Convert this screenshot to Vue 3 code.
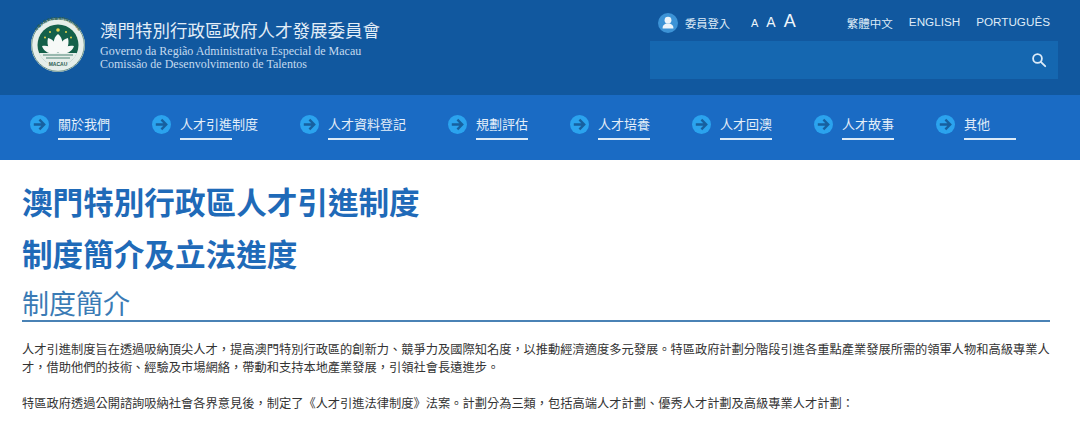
<template>
  <div class="page">
    <header class="top">
      <div class="brand">
        <svg class="emblem" width="56" height="56" viewBox="0 0 56 56">
          <defs>
            <path id="ringTop" d="M 3.6 33 A 25 25 0 1 1 52.4 33" />
          </defs>
          <circle cx="28" cy="28" r="27" fill="#e6eeea" />
          <circle cx="28" cy="28" r="26.3" fill="none" stroke="#6f958b" stroke-width="1" />
          <text class="ring-text"><textPath href="#ringTop" startOffset="50%" text-anchor="middle">中華人民共和國澳門特別行政區</textPath></text>
          <circle cx="28" cy="28" r="20.5" fill="#14604a" />
          <path d="M9 36 A20.5 20.5 0 0 0 47 36 Z" fill="#e6eeea" />
          <path d="M13 38 H43 M16 41 H40" stroke="#7fa89c" stroke-width="1.3" />
          <path d="M28 17 C33.5 21 34 30 28 36 C22 30 22.5 21 28 17 Z" fill="#f6f9f7" />
          <path d="M18 21 C24 22 27.5 29 27.5 36 C20 36 16 29 18 21 Z M38 21 C32 22 28.500 29 28.500 36 C36 36 40 29 38 21 Z" fill="#f6f9f7" />
          <path d="M12 29 C18 27.500 25 31 27 36 C20 38 14 35 12 29 Z M44 29 C38 27.500 31 31 29 36 C36 38 42 35 44 29 Z" fill="#f6f9f7" />
          <g fill="#e6d34a">
            <circle cx="28" cy="13" r="1.8" />
            <circle cx="20" cy="15" r="1" />
            <circle cx="36" cy="15" r="1" />
            <circle cx="15" cy="20.500" r="1" />
            <circle cx="41" cy="20.500" r="1" />
          </g>
          <text x="28" y="48.500" class="ring-name" text-anchor="middle">MACAU</text>
        </svg>
        <div class="brand-text">
          <div class="brand-zh">澳門特別行政區政府人才發展委員會</div>
          <div class="brand-pt">Governo da Região Administrativa Especial de Macau</div>
          <div class="brand-pt">Comissão de Desenvolvimento de Talentos</div>
        </div>
      </div>

      <div class="tools">
        <div class="tool-row">
          <a class="login">
            <span class="avatar">
              <svg width="20" height="20" viewBox="0 0 20 20">
                <circle cx="10" cy="7.2" r="3.4" fill="#eef5fb" />
                <path d="M4.6 15.4 C4.6 12 7 10.6 10 10.6 C13 10.6 15.4 12 15.4 15.4 Z" fill="#eef5fb" />
              </svg>
            </span>
            委員登入
          </a>
          <div class="sizes">
            <span class="size-s">A</span>
            <span class="size-m">A</span>
            <span class="size-l">A</span>
          </div>
          <div class="langs">
            <a>繁體中文</a>
            <a>ENGLISH</a>
            <a>PORTUGUÊS</a>
          </div>
        </div>
        <div class="search">
          <svg width="16" height="16" viewBox="0 0 16 16" fill="none" stroke="#dcebf8" stroke-width="1.8">
            <circle cx="6.5" cy="6.5" r="4.4" />
            <path d="M9.8 9.8 L14.2 14.2" stroke-linecap="round" />
          </svg>
        </div>
      </div>
    </header>

    <nav class="nav">
      <a v-for="item in menu" :key="item" class="nav-item">
        <svg class="nav-icon" width="19" height="19" viewBox="0 0 19 19">
          <circle cx="9.5" cy="9.5" r="9.5" fill="#2ba3ee" />
          <path d="M3.8 9.5 H13.6 M9.4 4.6 L14.2 9.5 L9.4 14.4" fill="none" stroke="#17609f" stroke-width="2.4" />
        </svg>
        <span class="nav-label">{{ item }}</span>
      </a>
    </nav>

    <main class="content">
      <h1>澳門特別行政區人才引進制度</h1>
      <h1 class="last">制度簡介及立法進度</h1>
      <h2>制度簡介</h2>
      <p>人才引進制度旨在透過吸納頂尖人才，提高澳門特別行政區的創新力、競爭力及國際知名度，以推動經濟適度多元發展。特區政府計劃分階段引進各重點產業發展所需的領軍人物和高級專業人才，借助他們的技術、經驗及市場網絡，帶動和支持本地產業發展，引領社會長遠進步。</p>
      <p>特區政府透過公開諮詢吸納社會各界意見後，制定了《人才引進法律制度》法案。計劃分為三類，包括高端人才計劃、優秀人才計劃及高級專業人才計劃：</p>
    </main>
  </div>
</template>

<script setup>
const menu = [
  "關於我們",
  "人才引進制度",
  "人才資料登記",
  "規劃評估",
  "人才培養",
  "人才回澳",
  "人才故事",
  "其他",
];
</script>

<style>
html, body { margin: 0; background: #fff; overflow: hidden; }
</style>

<style scoped>
.page { width: 1080px; height: 421px; overflow: hidden; font-family: "Noto Sans CJK TC", "Noto Sans", sans-serif; }

.top { height: 95px; box-sizing: border-box; background: #11589f; display: flex; justify-content: space-between; padding: 0 22px 0 30px; }
.brand { display: flex; align-items: center; gap: 14px; padding-bottom: 5px; }
.emblem { display: block; }
.ring-text { font-size: 3.6px; fill: #2d5f52; font-weight: 700; }
.ring-name { font-size: 5px; fill: #2d5f52; font-family: "Liberation Sans", sans-serif; font-weight: 700; }
.brand-text { margin-top: -2px; }
.brand-zh { font-size: 17.5px; line-height: 24px; color: #e2edf7; margin-bottom: 3px; }
.brand-pt { font-family: "Liberation Serif", serif; font-size: 12px; line-height: 13px; color: #c4daef; }

.tools { width: 408px; padding-top: 8px; display: flex; flex-direction: column; }
.tool-row { height: 30px; margin-bottom: 3px; display: flex; align-items: center; padding: 0 8px; color: #dfebf7; }
.login { display: flex; align-items: center; gap: 7px; font-size: 11.25px; }
.avatar { width: 20px; height: 20px; border-radius: 50%; background: #3d93d6; display: block; }
.avatar svg { display: block; }
.sizes { display: flex; align-items: baseline; gap: 8px; margin: -3px 0 0 21px; font-family: "Liberation Sans", sans-serif; color: #eef5fb; }
.size-s { font-size: 11px; }
.size-m { font-size: 14px; }
.size-l { font-size: 18px; }
.langs { margin-left: auto; display: flex; gap: 16px; font-size: 11.7px; font-family: "Liberation Sans", "Noto Sans CJK TC", sans-serif; }
.langs a:first-child { font-family: "Noto Sans CJK TC", sans-serif; font-size: 11.5px; }

.search { height: 38px; background: #1567b0; display: flex; align-items: center; justify-content: flex-end; padding-right: 11px; }

.nav { height: 65px; background: #1a6bc4; display: flex; align-items: flex-start; gap: 42px; padding: 20px 0 0 30px; box-sizing: border-box; }
.nav-item { display: flex; gap: 9px; color: #e3eef9; }
.nav-icon { display: block; }
.nav-label { display: inline-block; font-size: 13px; line-height: 18px; position: relative; padding-bottom: 7px; }
.nav-label::after { content: ""; position: absolute; left: 0; bottom: 0; width: 52px; height: 2px; background: #dcebf8; }

.content { padding: 19px 30px 0 22px; }
h1 { margin: 0 0 8px; font-size: 30.6px; line-height: 44px; font-weight: 700; color: #1f6ab8; }
h1.last { margin-bottom: 10px; }
h2 { margin: 0 0 18px; font-size: 27px; line-height: 35px; font-weight: 400; color: #3a7bb5; border-bottom: 2px solid #4a82b5; }
p { margin: 0 0 18px; font-size: 12.24px; line-height: 18px; color: #333; }
</style>
